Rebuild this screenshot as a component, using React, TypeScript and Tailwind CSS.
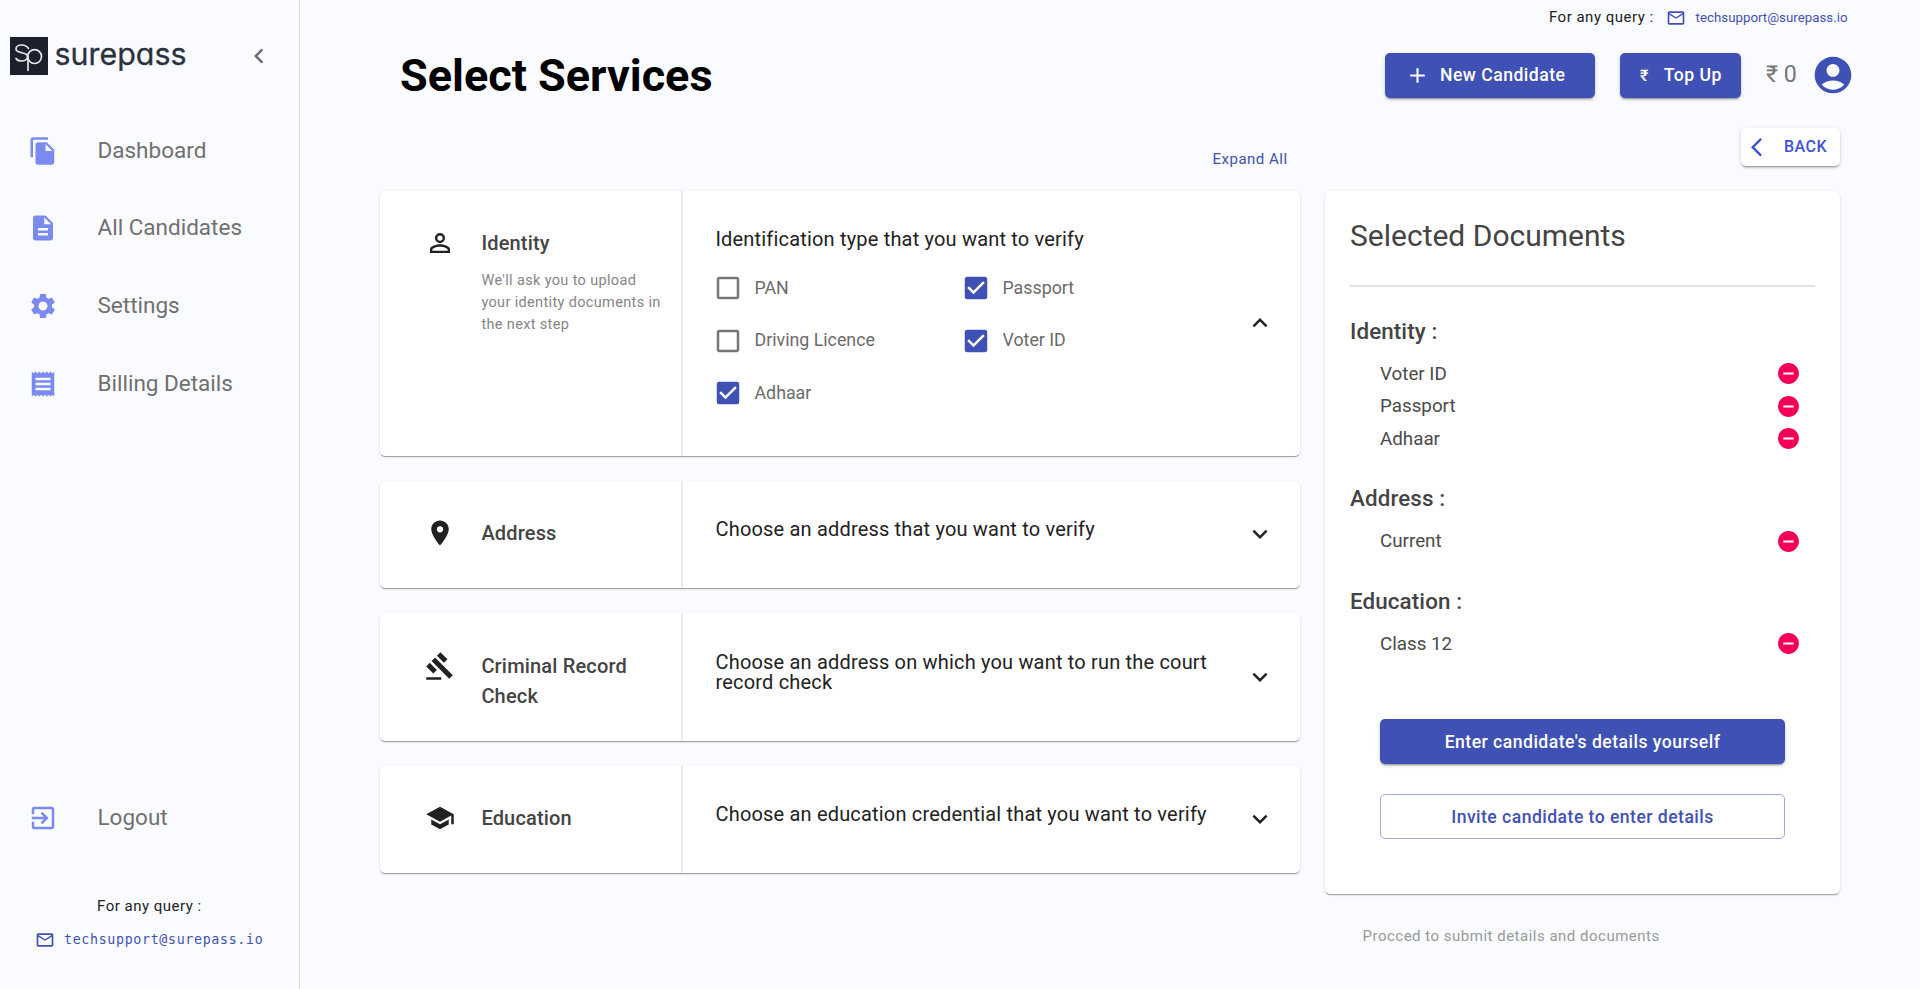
import type { ReactNode } from 'react';
import {
  MdFileCopy, MdDescription, MdSettings, MdReceipt, MdExitToApp, MdMailOutline, MdPersonOutline,
  MdLocationOn, MdGavel, MdSchool, MdChevronLeft, MdExpandLess, MdExpandMore, MdCheckBox,
  MdCheckBoxOutlineBlank, MdRemoveCircle, MdAccountCircle, MdAdd, MdArrowBackIos,
} from 'react-icons/md';

const cardShadow = 'shadow-[0_2px_1px_-1px_rgba(0,0,0,0.2),0_1px_1px_0_rgba(0,0,0,0.14),0_1px_3px_0_rgba(0,0,0,0.12)]';
const buttonShadow = 'shadow-[0_3px_1px_-2px_rgba(0,0,0,0.2),0_2px_2px_0_rgba(0,0,0,0.14),0_1px_5px_0_rgba(0,0,0,0.12)]';

function Logo() {
  return (
    <div className="flex items-center">
      <svg className="h-[38px] w-[38px]" viewBox="0 0 38 38" fill="none">
        <rect width="38" height="38" fill="#1b202c" />
        <g stroke="#e4e6ea" strokeWidth="1.7" strokeLinecap="round">
          <path d="M18.500 11.500C17 9 14 8 11.500 8c-3.300 0-5.500 1.600-5.500 4 0 5 11.500 2.500 11.500 7.500 0 2.800-2.800 4.500-6 4.500-2.500 0-4.500-.8-5.500-2.500" />
          <circle cx="24.600" cy="19.600" r="6.900" />
          <path d="M18 19.600V33.300" />
        </g>
      </svg>
      <svg className="h-[38px] w-[140px]" viewBox="0 0 140 38">
        <text x="6.500" y="28.300" textLength="132" lengthAdjust="spacingAndGlyphs" fontSize="30" fill="#2c3140" stroke="#2c3140" strokeWidth="0.300"
          fontFamily="Inter, sans-serif" style={{ fontFeatureSettings: '"cv11"' }}>surepass</text>
      </svg>
    </div>
  );
}

function NavItem({ icon, label }: { icon: ReactNode; label: string }) {
  return (
    <a className="flex h-[77.7px] items-center pl-7">
      <span className="w-[69.5px] text-[30px] text-[#7a8aee]">{icon}</span>
      <span className="text-[22.5px] text-[#707070]">{label}</span>
    </a>
  );
}

function Sidebar() {
  return (
    <aside className="flex h-full w-[300px] shrink-0 flex-col border-r border-[#dcdde2]">
      <div className="flex items-center justify-between pt-[37px] pr-[25px] pl-[10px]">
        <Logo />
        <MdChevronLeft className="size-[30px] text-[#6e6e6e]" />
      </div>
      <nav className="mt-[36.7px]">
        <NavItem icon={<MdFileCopy />} label="Dashboard" />
        <NavItem icon={<MdDescription />} label="All Candidates" />
        <NavItem icon={<MdSettings />} label="Settings" />
        <NavItem icon={<MdReceipt />} label="Billing Details" />
      </nav>
      <div className="mt-auto">
        <NavItem icon={<MdExitToApp />} label="Logout" />
      </div>
      <div className="mt-[37px] pb-[37.5px]">
        <p className="pl-[97px] text-[15px] leading-6 tracking-[0.5px] text-[#222]">For any query :</p>
        <p className="mt-[9.5px] flex h-6 items-center gap-[9px] pl-[35px] text-[#3f51b5]">
          <MdMailOutline className="size-5" />
          <span className="pt-px font-['DejaVu_Sans_Mono',monospace] text-[13.3px] tracking-[0.66px]">techsupport@surepass.io</span>
        </p>
      </div>
    </aside>
  );
}

function Header() {
  return (
    <header className="flex h-[130px] justify-between pr-[68px] pl-[100px]">
      <h1 className="mt-[49px] text-[45px] leading-[54px] font-bold text-black">Select Services</h1>
      <div className="flex flex-col items-end">
        <div className="flex h-[35px] items-center pr-[4.5px]">
          <span className="text-[15px] tracking-[0.5px] text-[#222]">For any query :</span>
          <MdMailOutline className="mr-[10px] ml-3 size-5 text-[#3f51b5]" />
          <span className="text-[13.3px] text-[#3f51b5]">techsupport@surepass.io</span>
        </div>
        <div className="mt-[18px] flex h-[45px] items-center">
          <button className={`flex h-[45px] w-[210px] items-center rounded-[5px] bg-[#3f51b5] pl-5 text-[17.6px] font-medium tracking-[0.48px] text-white ${buttonShadow}`}>
            <MdAdd className="mr-[10px] size-[25px]" />New Candidate
          </button>
          <button className={`ml-[25px] flex h-[45px] w-[121px] items-center rounded-[5px] bg-[#3f51b5] pl-5 text-[17.6px] font-medium tracking-[0.48px] text-white ${buttonShadow}`}>
            <span className="mr-[15px] text-[16px]">₹</span>Top Up
          </button>
          <span className="-mt-0.5 ml-[25px] w-[45px] text-[23.2px] text-[#777]">₹ 0</span>
          <MdAccountCircle className="-mt-0.5 -mr-[3px] size-[44px] text-[#3f51b5]" />
        </div>
      </div>
    </header>
  );
}

function Option({ label, checked }: { label: string; checked?: boolean }) {
  return (
    <label className="flex w-[248px] items-center gap-[11.5px]">
      {checked ? <MdCheckBox className="size-[30px] text-[#3f51b5]" /> : <MdCheckBoxOutlineBlank className="size-[30px] text-[#757575]" />}
      <span className="text-[17.8px] text-[#6b6b6b]">{label}</span>
    </label>
  );
}

type ServiceProps = { icon: ReactNode; title: string; note?: string; prompt: string; size: string; open?: boolean; children?: ReactNode };

function Service({ icon, title, note, prompt, size, open, children }: ServiceProps) {
  return (
    <section className={`flex rounded-[5px] bg-white ${size} ${cardShadow}`}>
      <div className="flex w-[303px] shrink-0 border-r-2 border-[#ebebeb] pt-[37.2px] pr-4 pl-[45px]">
        <span className="w-[56.4px] shrink-0 text-[30px] text-[#212121]">{icon}</span>
        <div>
          <h2 className="text-[20px] leading-[30px] font-medium tracking-[0.17px] text-[#444]">{title}</h2>
          {note && <p className="mt-[12px] text-[14.5px] leading-[22px] tracking-[0.35px] text-[#858585]">{note}</p>}
        </div>
      </div>
      <div className="flex-1 pt-[38.2px] pl-[32.5px]">
        <p className="w-[500px] text-[20px] leading-5 tracking-[0.18px] text-[#222]">{prompt}</p>
        {children}
      </div>
      <div className="flex w-[55px] shrink-0 items-center pb-px text-[30px] text-[#212121]">
        {open ? <MdExpandLess /> : <MdExpandMore />}
      </div>
    </section>
  );
}

function DocGroup({ title, docs }: { title: string; docs: string[] }) {
  return (
    <div className="mb-[28.3px]">
      <h3 className="text-[22.4px] leading-[30px] font-medium tracking-[0.1px] text-[#444]">{title} :</h3>
      <ul className="mt-[11.6px] pr-4 pl-[30px]">
        {docs.map((doc) => (
          <li key={doc} className="flex h-[32.5px] items-center justify-between text-[18.8px] text-[#4a4a4a]">
            {doc}<MdRemoveCircle className="-mr-0.5 size-[25px] text-[#f50057]" />
          </li>
        ))}
      </ul>
    </div>
  );
}

function Selected() {
  return (
    <aside className="w-[515px]">
      <div className={`flex h-[703px] flex-col rounded-[5px] bg-white px-[25px] ${cardShadow}`}>
        <h2 className="h-[96px] border-b-2 border-[#e2e2e2] pt-[25px] text-[30px] leading-10 text-[#444]">Selected Documents</h2>
        <div className="mt-[29px]">
          <DocGroup title="Identity" docs={['Voter ID', 'Passport', 'Adhaar']} />
          <DocGroup title="Address" docs={['Current']} />
          <DocGroup title="Education" docs={['Class 12']} />
        </div>
        <div className="mt-auto flex flex-col gap-[30px] px-[30px] pb-[55px]">
          <button className={`h-[45px] rounded-[5px] bg-[#3f51b5] pt-px text-[17.6px] font-medium tracking-[0.48px] text-white ${buttonShadow}`}>Enter candidate's details yourself</button>
          <button className="h-[45px] rounded-[5px] border border-[#9fa8da] pt-px text-[17.6px] font-medium tracking-[0.46px] text-[#3f51b5]">Invite candidate to enter details</button>
        </div>
      </div>
      <p className="mt-[30px] pl-[37.5px] text-[15px] leading-6 tracking-[0.5px] text-[#999]">Procced to submit details and documents</p>
    </aside>
  );
}

export default function App() {
  return (
    <div className="flex h-[989px] w-[1920px] overflow-hidden bg-[#fafbff] font-[Roboto,sans-serif]">
      <Sidebar />
      <main className="flex-1">
        <Header />
        <div className="-mt-0.5 flex h-[63px] items-start justify-between pr-[80px] pl-[80px]">
          <button className="mt-[19px] ml-[832.5px] text-[15px] leading-6 tracking-[0.5px] text-[#3f51b5]">Expand All</button>
          <button className={`flex h-[38px] w-[99px] items-center rounded-[5px] bg-white pl-[9.5px] text-[16px] font-medium tracking-[0.5px] text-[#3f51d5] ${buttonShadow}`}>
            <MdArrowBackIos className="mr-[11px] size-[22.5px]" />BACK
          </button>
        </div>
        <div className="flex gap-[25px] pl-[80px]">
          <div className="flex w-[920px] flex-col gap-[25px]">
            <Service icon={<MdPersonOutline />} title="Identity" note="We'll ask you to upload your identity documents in the next step" prompt="Identification type that you want to verify" size="h-[265px]" open>
              <div className="mt-[23.8px] -ml-[2.5px] flex w-[500px] flex-wrap gap-y-[22.6px]">
                <Option label="PAN" />
                <Option label="Passport" checked />
                <Option label="Driving Licence" />
                <Option label="Voter ID" checked />
                <Option label="Adhaar" checked />
              </div>
            </Service>
            <Service icon={<MdLocationOn />} title="Address" prompt="Choose an address that you want to verify" size="h-[107.4px]" />
            <Service icon={<MdGavel />} title="Criminal Record Check" prompt="Choose an address on which you want to run the court record check" size="h-[127.8px]" />
            <Service icon={<MdSchool />} title="Education" prompt="Choose an education credential that you want to verify" size="h-[107px]" />
          </div>
          <Selected />
        </div>
      </main>
    </div>
  );
}
